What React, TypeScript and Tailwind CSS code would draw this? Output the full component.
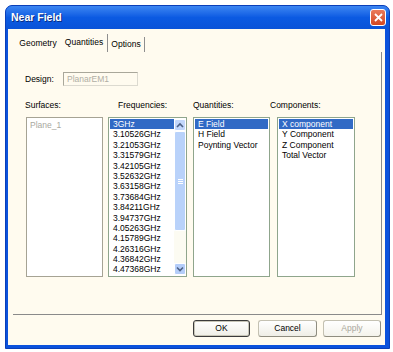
import React from "react";

const freqs = [
  "3GHz",
  "3.10526GHz",
  "3.21053GHz",
  "3.31579GHz",
  "3.42105GHz",
  "3.52632GHz",
  "3.63158GHz",
  "3.73684GHz",
  "3.84211GHz",
  "3.94737GHz",
  "4.05263GHz",
  "4.15789GHz",
  "4.26316GHz",
  "4.36842GHz",
  "4.47368GHz",
  "4.57895GHz",
];

function Row({ text, selected }: { text: string; selected?: boolean }) {
  return (
    <div
      className={
        "h-[10.4px] leading-[10.4px] pl-[3px] whitespace-nowrap " +
        (selected ? "bg-[#316ac5] text-white" : "text-black")
      }
    >
      {text}
    </div>
  );
}

function Chevron({ up }: { up?: boolean }) {
  return (
    <svg width="8" height="6" viewBox="0 0 8 6">
      <path
        d={up ? "M1 5 L4 2 L7 5" : "M1 1.5 L4 4.5 L7 1.5"}
        fill="none"
        stroke="#4d6185"
        strokeWidth="1.6"
      />
    </svg>
  );
}

export default function App() {
  return (
    <div
      className="w-[393px] h-[352px] bg-white pt-[5px] pl-[5px]"
      style={{ fontFamily: '"Liberation Sans", Arial, sans-serif' }}
    >
      <div className="w-[385px] h-[344px] rounded-t-[7px] bg-[#0b52dc] flex flex-col border border-[#0a3fb8]">
        {/* Title bar */}
        <div className="h-[23px] flex items-center justify-between rounded-t-[6px] bg-linear-to-b from-[#3c86f2] via-[#0b5ae2] to-[#0a53d8] pl-[5px] pr-[3px]">
          <span className="text-white font-bold text-[10.5px] [text-shadow:1px_1px_0_#0a2c80]">
            Near Field
          </span>
          <div className="w-[16px] h-[17px] rounded-[3px] border border-white bg-linear-to-b from-[#ea7a5a] to-[#d4461f] flex items-center justify-center">
            <svg width="9" height="9" viewBox="0 0 9 9">
              <path d="M1 1 L8 8 M8 1 L1 8" stroke="white" strokeWidth="1.8" />
            </svg>
          </div>
        </div>
        {/* Body */}
        <div className="flex-1 mx-[2px] mb-[3px] mr-[4px] bg-[#fffbef] flex flex-col text-[8.5px]">
          {/* Tabs */}
          <div className="flex items-end h-[23px] pl-[7px]">
            <div className="h-[17px] w-[46px] flex items-center justify-center text-black">
              Geometry
            </div>
            <div className="h-[18px] w-[47px] pb-[1px] flex items-center justify-center border-r border-[#8e8e8e] text-black">
              Quantities
            </div>
            <div className="h-[15px] w-[37px] flex items-center justify-center border-r border-[#8e8e8e] text-black">
              Options
            </div>
          </div>
          {/* Panel */}
          <div className="ml-[5px] w-[369px] h-[263px] border-r border-b border-[#8a8a8a] flex flex-col">
            <div className="flex items-center mt-[20px] pl-[12px]">
              <span className="w-[38px] text-black">Design:</span>
              <div className="w-[75px] h-[14px] border border-[#a9a79a] border-r-[#dcdad0] border-b-[#dcdad0] flex items-center pl-[3px] text-[#b0aea4]">
                PlanarEM1
              </div>
            </div>
            <div className="flex mt-[14px] pl-[12px] h-[10px] leading-[10px] text-black">
              <span className="w-[93px]">Surfaces:</span>
              <span className="w-[75px]">Frequencies:</span>
              <span className="w-[77px]">Quantities:</span>
              <span>Components:</span>
            </div>
            <div className="flex mt-[7px] pl-[13px] h-[160px]">
              {/* Surfaces */}
              <div className="w-[77px] h-full bg-white border border-[#a6a394] p-[1px]">
                <div className="h-[10.4px] leading-[10.4px] pl-[2px] mt-[1px] text-[#a8a8a0]">
                  Plane_1
                </div>
              </div>
              {/* Frequencies */}
              <div className="ml-[5px] w-[79px] h-full bg-white border border-[#8fa58c] flex overflow-hidden">
                <div className="w-[65px] pl-[1px] pt-[1px] overflow-hidden">
                  {freqs.map((f, i) => (
                    <Row key={f} text={f} selected={i === 0} />
                  ))}
                </div>
                <div className="w-[12px] flex flex-col pt-[1px] pb-[1px]">
                  <div className="h-[12px] rounded-[2px] bg-[#c3d7fb] border border-white flex items-center justify-center">
                    <Chevron up />
                  </div>
                  <div className="h-[100px] rounded-[2px] bg-[#b9d2fa] border border-white flex flex-col items-center justify-center gap-[1px]">
                    <div className="w-[5px] h-[1px] bg-white" />
                    <div className="w-[5px] h-[1px] bg-white" />
                    <div className="w-[5px] h-[1px] bg-white" />
                  </div>
                  <div className="flex-1 bg-[#fcfbf2]" />
                  <div className="h-[12px] rounded-[2px] bg-[#b4cdf9] border border-white flex items-center justify-center">
                    <Chevron />
                  </div>
                </div>
              </div>
              {/* Quantities */}
              <div className="ml-[6px] w-[77px] h-full bg-white border border-[#8fa58c] p-[1px]">
                <Row text="E Field" selected />
                <Row text="H Field" />
                <Row text="Poynting Vector" />
              </div>
              {/* Components */}
              <div className="ml-[7px] w-[78px] h-full bg-white border border-[#8fa58c] p-[1px]">
                <Row text="X component" selected />
                <Row text="Y Component" />
                <Row text="Z Component" />
                <Row text="Total Vector" />
              </div>
            </div>
          </div>
          {/* Buttons */}
          <div className="flex justify-end mt-[5px] pr-[4px]">
            <div className="w-[57px] h-[17px] rounded-[3px] border border-[#3a3a3a] shadow-[inset_0_0_0_1px_#c8c6b8] bg-linear-to-b from-white to-[#efeee6] flex items-center justify-center text-black">
              OK
            </div>
            <div className="ml-[8px] w-[59px] h-[17px] rounded-[3px] border border-[#c4c1b2] border-r-[#8f8d80] border-b-[#8f8d80] bg-linear-to-b from-white to-[#efeee6] flex items-center justify-center text-black">
              Cancel
            </div>
            <div className="ml-[6px] w-[58px] h-[17px] rounded-[3px] border border-[#c4c1b2] border-r-[#8f8d80] border-b-[#8f8d80] bg-linear-to-b from-white to-[#f4f3ec] flex items-center justify-center text-[#aaa89c]">
              Apply
            </div>
          </div>
        </div>
      </div>
    </div>
  );
}
